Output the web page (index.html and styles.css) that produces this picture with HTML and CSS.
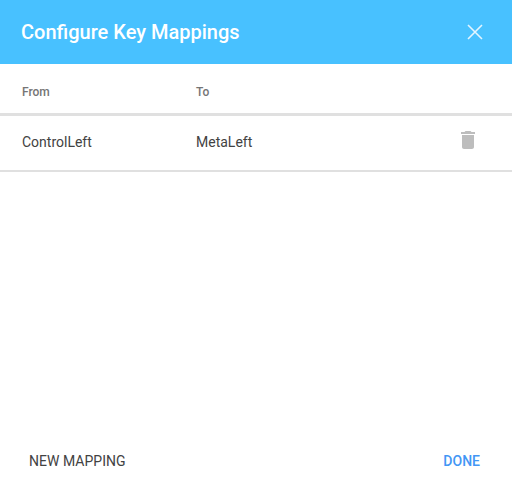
FILE: index.html
```html
<!DOCTYPE html>
<html lang="en">
<head>
<meta charset="UTF-8">
<title>Configure Key Mappings</title>
<link rel="stylesheet" href="styles.css">
</head>
<body>

<div class="dialog">
  <!-- Header -->
  <div class="header">
    <h1>Configure Key Mappings</h1>
    <svg class="close" width="24" height="24" viewBox="0 0 24 24">
      <path d="M5 5 19 19M19 5 5 19"/>
    </svg>
  </div>

  <!-- Table -->
  <div class="row head">
    <div class="col-from">From</div>
    <div class="col-to">To</div>
  </div>
  <div class="row body">
    <div class="col-from">ControlLeft</div>
    <div class="col-to">MetaLeft</div>
    <svg class="trash" width="24" height="24" viewBox="0 0 24 24">
      <path d="M6 19c0 1.100.9 2 2 2h8c1.100 0 2-.9 2-2V7H6v12zM19 4h-3.500l-1-1h-5l-1 1H5v2h14V4z"/>
    </svg>
  </div>

  <!-- Footer -->
  <div class="footer">
    <span class="btn">NEW MAPPING</span>
    <span class="btn done">DONE</span>
  </div>
</div>

</body>
</html>
```

FILE: styles.css
```css
body {
  margin: 0;
  font-family: Roboto, sans-serif;
  background: white;
}

.dialog {
  height: 494px;
  display: flex;
  flex-direction: column;
}

/* Header */
.header {
  height: 64px;
  background: #48c1ff;
  display: flex;
  align-items: center;
  justify-content: space-between;
  padding: 0 25px 0 21px;
  flex-shrink: 0;
}

.header h1 {
  margin: 0;
  font-size: 20px;
  font-weight: 500;
  color: white;
}

.close {
  fill: none;
  stroke: white;
  stroke-width: 1.6;
  opacity: 0.85;
}

/* Table */
.row {
  display: flex;
  align-items: center;
  padding-left: 22px;
  box-sizing: border-box;
}

.col-from { width: 174px; }

.head {
  height: 52px;
  padding-top: 6px;
  border-bottom: 3px solid #e0e0e0;
  font-size: 12px;
  font-weight: 500;
  color: #757575;
}

.body {
  height: 56px;
  padding-bottom: 2px;
  border-bottom: 2px solid #e0e0e0;
  font-size: 14px;
  color: #424242;
}

.trash {
  fill: #bdbdbd;
  margin-left: auto;
  margin-right: 32px;
  margin-top: -4px;
}

/* Footer */
.footer {
  margin-top: auto;
  display: flex;
  justify-content: space-between;
  padding: 0 32px 24px 29px;
}

.btn {
  font-size: 14px;
  line-height: 18px;
  letter-spacing: 0.02px;
  color: #424242;
}

.done {
  color: #4296f5;
  font-weight: 500;
  letter-spacing: 0;
}
```
